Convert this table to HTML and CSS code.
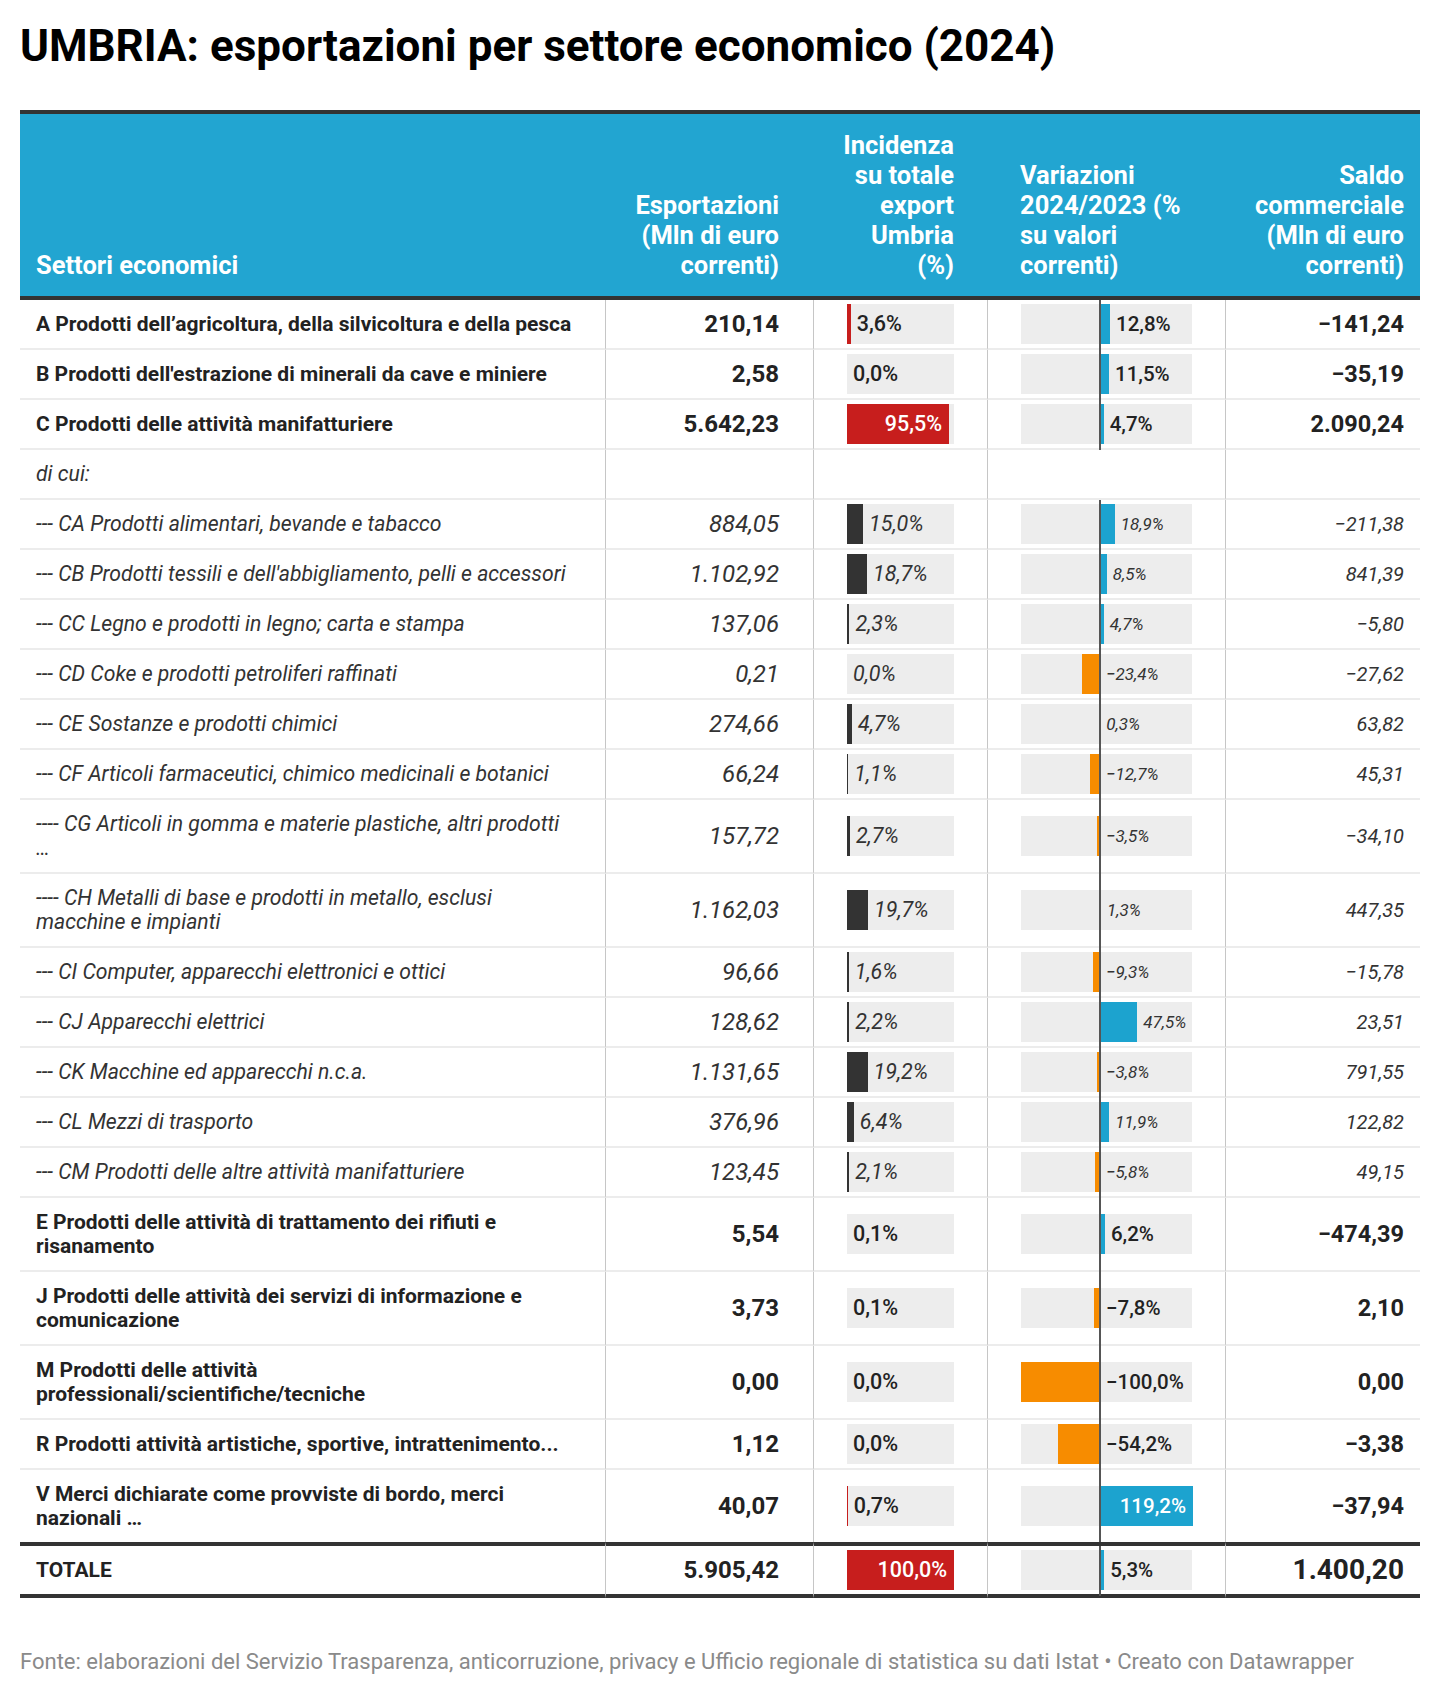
FILE: index.html
```html
<!DOCTYPE html>
<html lang="it">
<head>
<meta charset="utf-8">
<title>UMBRIA: esportazioni per settore economico (2024)</title>
<link rel="stylesheet" href="styles.css">
</head>
<body>
<h1 class="title">UMBRIA: esportazioni per settore economico (2024)</h1>
<table class="tbl">
<colgroup>
<col class="c1"><col class="c2"><col class="c3"><col class="c4"><col class="c5">
</colgroup>
<thead>
<tr>
<th class="h1c">Settori economici</th>
<th class="h2c">Esportazioni<br>(Mln di euro<br>correnti)</th>
<th class="h3c">Incidenza<br>su totale<br>export<br>Umbria<br>(%)</th>
<th class="h4c">Variazioni<br>2024/2023 (%<br>su valori<br>correnti)</th>
<th class="h5c">Saldo<br>commerciale<br>(Mln di euro<br>correnti)</th>
</tr>
</thead>
<tbody>
<tr class="b">
<td class="lab">A Prodotti dell’agricoltura, della silvicoltura e della pesca</td>
<td class="num">210,14</td>
<td class="bc3"><div class="track"><div class="bar red" style="width:3.6%"></div><span class="lbl">3,6%</span></div></td>
<td class="bc4"><div class="track4"><div class="neg"></div><div class="pos"><div class="bar blue" style="width:10.0px"></div><span class="lbl">12,8%</span></div></div></td>
<td class="sal">−141,24</td>
</tr>
<tr class="b">
<td class="lab">B Prodotti dell'estrazione di minerali da cave e miniere</td>
<td class="num">2,58</td>
<td class="bc3"><div class="track"><div class="bar red" style="width:0%"></div><span class="lbl">0,0%</span></div></td>
<td class="bc4"><div class="track4"><div class="neg"></div><div class="pos"><div class="bar blue" style="width:9.0px"></div><span class="lbl">11,5%</span></div></div></td>
<td class="sal">−35,19</td>
</tr>
<tr class="b">
<td class="lab">C Prodotti delle attività manifatturiere</td>
<td class="num">5.642,23</td>
<td class="bc3"><div class="track"><div class="bar red in" style="width:95.5%"><span>95,5%</span></div></div></td>
<td class="bc4"><div class="track4"><div class="neg"></div><div class="pos"><div class="bar blue" style="width:3.7px"></div><span class="lbl">4,7%</span></div></div></td>
<td class="sal">2.090,24</td>
</tr>
<tr class="s">
<td class="lab">di cui:</td>
<td class="num"></td>
<td class="empty"></td>
<td class="empty"></td>
<td class="sal"></td>
</tr>
<tr class="s">
<td class="lab">--- CA Prodotti alimentari, bevande e tabacco</td>
<td class="num">884,05</td>
<td class="bc3"><div class="track"><div class="bar dark" style="width:15.0%"></div><span class="lbl">15,0%</span></div></td>
<td class="bc4"><div class="track4"><div class="neg"></div><div class="pos"><div class="bar blue" style="width:14.8px"></div><span class="lbl">18,9%</span></div></div></td>
<td class="sal">−211,38</td>
</tr>
<tr class="s">
<td class="lab">--- CB Prodotti tessili e dell'abbigliamento, pelli e accessori</td>
<td class="num">1.102,92</td>
<td class="bc3"><div class="track"><div class="bar dark" style="width:18.7%"></div><span class="lbl">18,7%</span></div></td>
<td class="bc4"><div class="track4"><div class="neg"></div><div class="pos"><div class="bar blue" style="width:6.7px"></div><span class="lbl">8,5%</span></div></div></td>
<td class="sal">841,39</td>
</tr>
<tr class="s">
<td class="lab">--- CC Legno e prodotti in legno; carta e stampa</td>
<td class="num">137,06</td>
<td class="bc3"><div class="track"><div class="bar dark" style="width:2.3%"></div><span class="lbl">2,3%</span></div></td>
<td class="bc4"><div class="track4"><div class="neg"></div><div class="pos"><div class="bar blue" style="width:3.7px"></div><span class="lbl">4,7%</span></div></div></td>
<td class="sal">−5,80</td>
</tr>
<tr class="s">
<td class="lab">--- CD Coke e prodotti petroliferi raffinati</td>
<td class="num">0,21</td>
<td class="bc3"><div class="track"><div class="bar dark" style="width:0%"></div><span class="lbl">0,0%</span></div></td>
<td class="bc4"><div class="track4"><div class="neg"><div class="bar orange" style="width:18.4px"></div></div><div class="pos"><span class="lbl">−23,4%</span></div></div></td>
<td class="sal">−27,62</td>
</tr>
<tr class="s">
<td class="lab">--- CE Sostanze e prodotti chimici</td>
<td class="num">274,66</td>
<td class="bc3"><div class="track"><div class="bar dark" style="width:4.7%"></div><span class="lbl">4,7%</span></div></td>
<td class="bc4"><div class="track4"><div class="neg"></div><div class="pos"><div class="bar blue" style="width:0.3px"></div><span class="lbl">0,3%</span></div></div></td>
<td class="sal">63,82</td>
</tr>
<tr class="s">
<td class="lab">--- CF Articoli farmaceutici, chimico medicinali e botanici</td>
<td class="num">66,24</td>
<td class="bc3"><div class="track"><div class="bar dark" style="width:1.1%"></div><span class="lbl">1,1%</span></div></td>
<td class="bc4"><div class="track4"><div class="neg"><div class="bar orange" style="width:10.0px"></div></div><div class="pos"><span class="lbl">−12,7%</span></div></div></td>
<td class="sal">45,31</td>
</tr>
<tr class="s">
<td class="lab">---- CG Articoli in gomma e materie plastiche, altri prodotti<br>…</td>
<td class="num">157,72</td>
<td class="bc3"><div class="track"><div class="bar dark" style="width:2.7%"></div><span class="lbl">2,7%</span></div></td>
<td class="bc4"><div class="track4"><div class="neg"><div class="bar orange" style="width:2.7px"></div></div><div class="pos"><span class="lbl">−3,5%</span></div></div></td>
<td class="sal">−34,10</td>
</tr>
<tr class="s">
<td class="lab">---- CH Metalli di base e prodotti in metallo, esclusi<br>macchine e impianti</td>
<td class="num">1.162,03</td>
<td class="bc3"><div class="track"><div class="bar dark" style="width:19.7%"></div><span class="lbl">19,7%</span></div></td>
<td class="bc4"><div class="track4"><div class="neg"></div><div class="pos"><div class="bar blue" style="width:1.0px"></div><span class="lbl">1,3%</span></div></div></td>
<td class="sal">447,35</td>
</tr>
<tr class="s">
<td class="lab">--- CI Computer, apparecchi elettronici e ottici</td>
<td class="num">96,66</td>
<td class="bc3"><div class="track"><div class="bar dark" style="width:1.6%"></div><span class="lbl">1,6%</span></div></td>
<td class="bc4"><div class="track4"><div class="neg"><div class="bar orange" style="width:7.3px"></div></div><div class="pos"><span class="lbl">−9,3%</span></div></div></td>
<td class="sal">−15,78</td>
</tr>
<tr class="s">
<td class="lab">--- CJ Apparecchi elettrici</td>
<td class="num">128,62</td>
<td class="bc3"><div class="track"><div class="bar dark" style="width:2.2%"></div><span class="lbl">2,2%</span></div></td>
<td class="bc4"><div class="track4"><div class="neg"></div><div class="pos"><div class="bar blue" style="width:37.3px"></div><span class="lbl">47,5%</span></div></div></td>
<td class="sal">23,51</td>
</tr>
<tr class="s">
<td class="lab">--- CK Macchine ed apparecchi n.c.a.</td>
<td class="num">1.131,65</td>
<td class="bc3"><div class="track"><div class="bar dark" style="width:19.2%"></div><span class="lbl">19,2%</span></div></td>
<td class="bc4"><div class="track4"><div class="neg"><div class="bar orange" style="width:3.0px"></div></div><div class="pos"><span class="lbl">−3,8%</span></div></div></td>
<td class="sal">791,55</td>
</tr>
<tr class="s">
<td class="lab">--- CL Mezzi di trasporto</td>
<td class="num">376,96</td>
<td class="bc3"><div class="track"><div class="bar dark" style="width:6.4%"></div><span class="lbl">6,4%</span></div></td>
<td class="bc4"><div class="track4"><div class="neg"></div><div class="pos"><div class="bar blue" style="width:9.3px"></div><span class="lbl">11,9%</span></div></div></td>
<td class="sal">122,82</td>
</tr>
<tr class="s">
<td class="lab">--- CM Prodotti delle altre attività manifatturiere</td>
<td class="num">123,45</td>
<td class="bc3"><div class="track"><div class="bar dark" style="width:2.1%"></div><span class="lbl">2,1%</span></div></td>
<td class="bc4"><div class="track4"><div class="neg"><div class="bar orange" style="width:4.6px"></div></div><div class="pos"><span class="lbl">−5,8%</span></div></div></td>
<td class="sal">49,15</td>
</tr>
<tr class="b">
<td class="lab">E Prodotti delle attività di trattamento dei rifiuti e<br>risanamento</td>
<td class="num">5,54</td>
<td class="bc3"><div class="track"><div class="bar red" style="width:0%"></div><span class="lbl">0,1%</span></div></td>
<td class="bc4"><div class="track4"><div class="neg"></div><div class="pos"><div class="bar blue" style="width:4.9px"></div><span class="lbl">6,2%</span></div></div></td>
<td class="sal">−474,39</td>
</tr>
<tr class="b">
<td class="lab">J Prodotti delle attività dei servizi di informazione e<br>comunicazione</td>
<td class="num">3,73</td>
<td class="bc3"><div class="track"><div class="bar red" style="width:0%"></div><span class="lbl">0,1%</span></div></td>
<td class="bc4"><div class="track4"><div class="neg"><div class="bar orange" style="width:6.1px"></div></div><div class="pos"><span class="lbl">−7,8%</span></div></div></td>
<td class="sal">2,10</td>
</tr>
<tr class="b">
<td class="lab">M Prodotti delle attività<br>professionali/scientifiche/tecniche</td>
<td class="num">0,00</td>
<td class="bc3"><div class="track"><div class="bar red" style="width:0%"></div><span class="lbl">0,0%</span></div></td>
<td class="bc4"><div class="track4"><div class="neg"><div class="bar orange" style="width:79px"></div></div><div class="pos"><span class="lbl">−100,0%</span></div></div></td>
<td class="sal">0,00</td>
</tr>
<tr class="b">
<td class="lab">R Prodotti attività artistiche, sportive, intrattenimento...</td>
<td class="num">1,12</td>
<td class="bc3"><div class="track"><div class="bar red" style="width:0%"></div><span class="lbl">0,0%</span></div></td>
<td class="bc4"><div class="track4"><div class="neg"><div class="bar orange" style="width:42.5px"></div></div><div class="pos"><span class="lbl">−54,2%</span></div></div></td>
<td class="sal">−3,38</td>
</tr>
<tr class="b last">
<td class="lab">V Merci dichiarate come provviste di bordo, merci<br>nazionali …</td>
<td class="num">40,07</td>
<td class="bc3"><div class="track"><div class="bar red" style="width:0.7%"></div><span class="lbl">0,7%</span></div></td>
<td class="bc4"><div class="track4"><div class="neg"></div><div class="pos"><div class="bar blue in" style="width:93px"><span>119,2%</span></div></div></div></td>
<td class="sal">−37,94</td>
</tr>
</tbody>
<tfoot>
<tr class="b tot">
<td class="lab">TOTALE</td>
<td class="num">5.905,42</td>
<td class="bc3"><div class="track"><div class="bar red in" style="width:100%"><span>100,0%</span></div></div></td>
<td class="bc4"><div class="track4"><div class="neg"></div><div class="pos"><div class="bar blue" style="width:4.2px"></div><span class="lbl">5,3%</span></div></div></td>
<td class="sal big">1.400,20</td>
</tr>
</tfoot>
</table>
<p class="foot">Fonte: elaborazioni del Servizio Trasparenza, anticorruzione, privacy e Ufficio regionale di statistica su dati Istat • Creato con Datawrapper</p>
</body>
</html>
```
FILE: styles.css
```css
html, body {
  margin: 0;
  padding: 0;
  background: #fff;
}
body {
  padding: 0 20px;
  font-family: Roboto, "Noto Sans", "Liberation Sans", sans-serif;
  color: #333;
}
.title {
  margin: 20px 0 38px;
  font-size: 44px;
  line-height: 52px;
  font-weight: 700;
  color: #000;
}
.tbl {
  width: 1400px;
  table-layout: fixed;
  border-collapse: separate;
  border-spacing: 0;
}
.c1 { width: 585px; }
.c2 { width: 208px; }
.c3 { width: 174px; }
.c4 { width: 238px; }
.c5 { width: 195px; }

thead th {
  background: #22a5d1;
  color: #fff;
  font-size: 25.5px;
  line-height: 30px;
  font-weight: 700;
  vertical-align: bottom;
  padding: 16px;
  border-top: 4px solid #333;
  border-bottom: 4px solid #333;
}
.h1c { text-align: left; }
.h2c { text-align: right; padding-right: 34px; }
.h3c { text-align: right; padding-right: 33px; }
.h4c { text-align: left; padding-left: 33px; }
.h5c { text-align: right; padding-right: 16px; }

tbody td, tfoot td {
  padding: 12px 16px;
  border-bottom: 2px solid #ececec;
  font-size: 21px;
  line-height: 24px;
  vertical-align: middle;
  white-space: nowrap;
}
tbody td + td, tfoot td + td {
  border-left: 1px solid #c6c6c6;
}
.b td { font-weight: 700; color: #222; }
.s td { font-style: italic; font-weight: 400; color: #333; }
tbody .s .lab { font-size: 21.2px; }

.num {
  text-align: right;
  padding-right: 34px;
}
tbody .num, tfoot .num { font-size: 24px; }
tbody .sal, tfoot .sal {
  text-align: right;
  font-size: 20px;
}
tbody .b .sal, tfoot .b .sal { font-size: 23.5px; }
tfoot .tot .sal.big { font-size: 28px; }

tbody .bc3, tbody .bc4, tbody .empty, tfoot .bc3, tfoot .bc4 {
  padding: 4px 33px;
}
.bc4 { position: relative; }
.bc4::before {
  content: "";
  position: absolute;
  left: 111px;
  top: 0;
  bottom: -2px;
  width: 2px;
  background: #555;
}
.track, .track4 {
  display: flex;
  align-items: center;
  height: 40px;
  background: #ededed;
}
.neg {
  width: 79px;
  height: 100%;
  display: flex;
  justify-content: flex-end;
  flex: none;
}
.pos {
  flex: 1;
  height: 100%;
  display: flex;
  align-items: center;
}
.bar {
  height: 100%;
  flex: none;
}
.red { background: #c71e1d; }
.dark { background: #333; }
.blue { background: #1ca3cf; }
.orange { background: #f78c00; }
.lbl {
  margin-left: 6px;
  line-height: 24px;
  white-space: nowrap;
}
.bc3 .lbl { font-size: 21.5px; }
.bc4 .lbl { font-size: 20.5px; }
.b .lbl { font-weight: 500; }
.s .bc4 .lbl { font-size: 17px; }
.bar.in {
  display: flex;
  align-items: center;
  justify-content: flex-end;
  padding-right: 7px;
  box-sizing: border-box;
  color: #fff;
  font-size: 21.5px;
  font-weight: 500;
}
.bc4 .bar.in { font-size: 20.5px; }
.last td { border-bottom: 0; }
.tot td {
  border-top: 4px solid #333;
  border-bottom: 4px solid #333;
}
.foot {
  margin: 52px 0 0;
  font-size: 22px;
  line-height: 24px;
  color: #8a8a8a;
}
```
